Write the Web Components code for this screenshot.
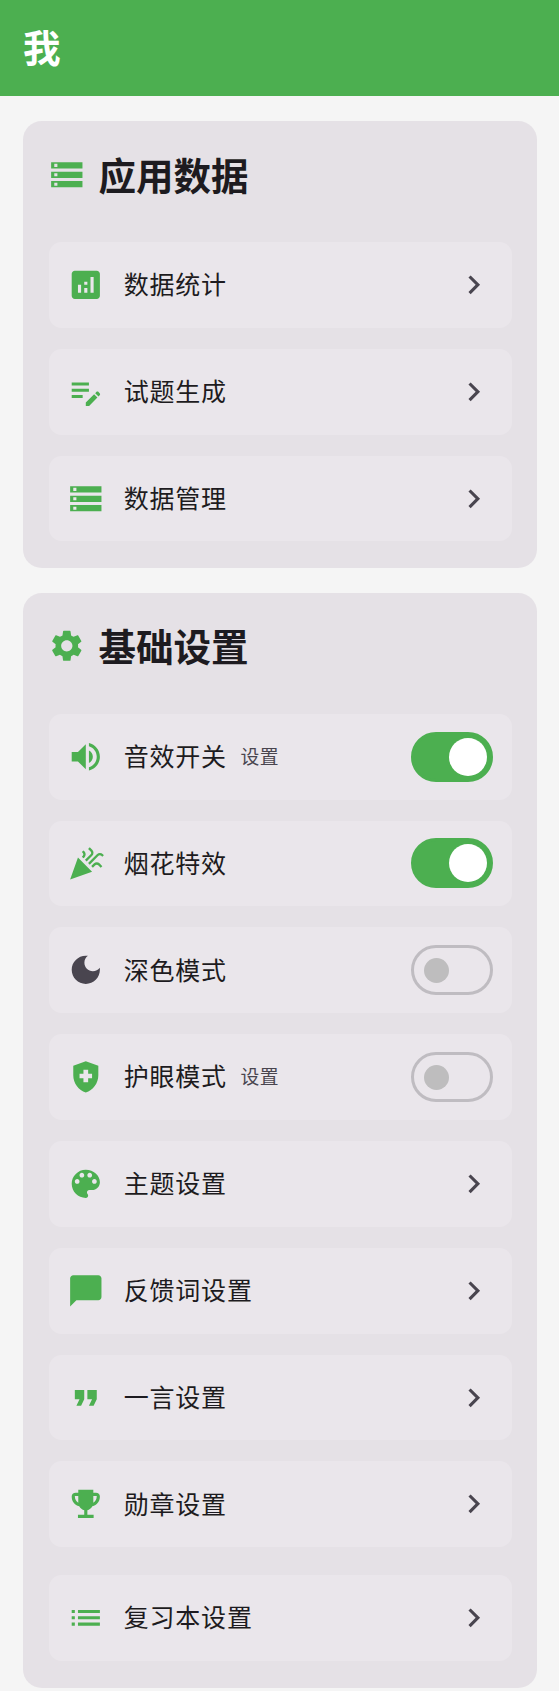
<!DOCTYPE html>
<html lang="zh-CN">
<head>
<meta charset="UTF-8">
<meta name="viewport" content="width=device-width, initial-scale=1">
<title>我</title>
<style>
    body {
        margin: 0;
        background: #f5f5f5;
        font-family: "Noto Sans CJK SC", sans-serif;
    }
</style>
</head>
<body>
<settings-page heading="我">
    <settings-card icon="storage" heading="应用数据">
        <settings-row icon="analytics">数据统计</settings-row>
        <settings-row icon="editNote">试题生成</settings-row>
        <settings-row icon="storage">数据管理</settings-row>
    </settings-card>
    <settings-card icon="settings" heading="基础设置">
        <settings-row icon="volume" hint="设置">音效开关<toggle-switch slot="action" checked></toggle-switch></settings-row>
        <settings-row icon="celebration">烟花特效<toggle-switch slot="action" checked></toggle-switch></settings-row>
        <settings-row icon="moon" muted>深色模式<toggle-switch slot="action"></toggle-switch></settings-row>
        <settings-row icon="shield" hint="设置">护眼模式<toggle-switch slot="action"></toggle-switch></settings-row>
        <settings-row icon="palette">主题设置</settings-row>
        <settings-row icon="chat">反馈词设置</settings-row>
        <settings-row icon="quote">一言设置</settings-row>
        <settings-row icon="trophy">勋章设置</settings-row>
        <settings-row icon="list" spaced>复习本设置</settings-row>
    </settings-card>
</settings-page>

<script>
const ICONS = {
    storage: 'M2 20h20v-4H2v4zm2-3h2v2H4v-2zM2 4v4h20V4H2zm4 3H4V5h2v2zm-4 7h20v-4H2v4zm2-3h2v2H4v-2z',
    analytics: 'M19 3H5c-1.1 0-2 .9-2 2v14c0 1.1.9 2 2 2h14c1.1 0 2-.9 2-2V5c0-1.1-.9-2-2-2zM9 17H7v-5h2v5zm4 0h-2v-3h2v3zm0-5h-2v-2h2v2zm4 5h-2V7h2v10z',
    editNote: 'M3 10h11v2H3v-2zm0-2h11V6H3v2zm0 8h7v-2H3v2zm15.01-3.13.71-.71c.39-.39 1.02-.39 1.41 0l.71.71c.39.39.39 1.02 0 1.41l-.71.71-2.12-2.12zm-.71.71-5.3 5.3V21h2.12l5.3-5.3-2.12-2.12z',
    settings: 'M19.14 12.94c.04-.3.06-.61.06-.94 0-.32-.02-.64-.07-.94l2.03-1.58c.18-.14.23-.41.12-.61l-1.92-3.32c-.12-.22-.37-.29-.59-.22l-2.39.96c-.5-.38-1.03-.7-1.62-.94l-.36-2.54c-.04-.24-.24-.41-.48-.41h-3.84c-.24 0-.43.17-.47.41l-.36 2.54c-.59.24-1.13.57-1.62.94l-2.39-.96c-.22-.08-.47 0-.59.22L2.74 8.87c-.12.21-.08.47.12.61l2.03 1.58c-.05.3-.09.63-.09.94s.02.64.07.94l-2.03 1.58c-.18.14-.23.41-.12.61l1.92 3.32c.12.22.37.29.59.22l2.39-.96c.5.38 1.03.7 1.62.94l.36 2.54c.05.24.24.41.48.41h3.84c.24 0 .44-.17.47-.41l.36-2.54c.59-.24 1.13-.56 1.62-.94l2.39.96c.22.08.47 0 .59-.22l1.92-3.32c.12-.22.07-.47-.12-.61l-2.01-1.58zM12 15.6c-1.98 0-3.6-1.62-3.6-3.6s1.62-3.6 3.6-3.6 3.6 1.62 3.6 3.6-1.62 3.6-3.6 3.6z',
    volume: 'M3 9v6h4l5 5V4L7 9H3zm13.5 3c0-1.77-1.02-3.29-2.5-4.03v8.05c1.48-.73 2.5-2.25 2.5-4.02zM14 3.23v2.06c2.89.86 5 3.54 5 6.71s-2.11 5.85-5 6.71v2.06c4.01-.91 7-4.49 7-8.77s-2.99-7.86-7-8.77z',
    celebration: 'M2 22l14-5-9-9zM14.53 12.53l5.59-5.59c.49-.49 1.28-.49 1.77 0l.59.59 1.06-1.06-.59-.59c-1.07-1.07-2.82-1.07-3.89 0l-5.59 5.59 1.06 1.06zM10.06 6.88l-.59.59 1.06 1.06.59-.59c1.07-1.07 1.07-2.82 0-3.89l-.59-.59-1.06 1.07.59.59c.48.48.48 1.28 0 1.76zM17.06 11.88l-1.59 1.59 1.06 1.06 1.59-1.59c.49-.49 1.28-.49 1.77 0l1.61 1.61 1.06-1.06-1.61-1.61c-1.08-1.07-2.82-1.07-3.89 0zM15.06 5.88l-3.59 3.59 1.06 1.06 3.59-3.59c1.07-1.07 1.07-2.82 0-3.89l-1.59-1.59-1.06 1.06 1.59 1.59c.48.49.48 1.29 0 1.77z',
    moon: 'M12 3c-4.97 0-9 4.03-9 9s4.03 9 9 9 9-4.03 9-9c0-.46-.04-.92-.1-1.36-.98 1.37-2.58 2.26-4.4 2.26-2.98 0-5.4-2.42-5.4-5.4 0-1.81.89-3.42 2.26-4.4-.44-.06-.9-.1-1.36-.1z',
    shield: 'M12 2 4 5v6.09c0 5.05 3.41 9.76 8 10.91 4.59-1.15 8-5.86 8-10.91V5l-8-3zM10.5 13H8v-3h2.5V7.5h3V10H16v3h-2.5v2.5h-3V13z',
    palette: 'M12 3c-4.97 0-9 4.03-9 9s4.03 9 9 9c.83 0 1.5-.67 1.5-1.5 0-.39-.15-.74-.39-1.01-.23-.26-.38-.61-.38-.99 0-.83.67-1.5 1.5-1.5H16c2.76 0 5-2.24 5-5 0-4.42-4.03-8-9-8zm-5.5 9c-.83 0-1.5-.67-1.5-1.5S5.67 9 6.5 9 8 9.67 8 10.5 7.33 12 6.5 12zm3-4C8.67 8 8 7.33 8 6.5S8.67 5 9.5 5s1.5.67 1.5 1.5S10.33 8 9.5 8zm5 0c-.83 0-1.5-.67-1.5-1.5S13.67 5 14.5 5s1.5.67 1.5 1.5S15.33 8 14.5 8zm3 4c-.83 0-1.5-.67-1.5-1.5S16.67 9 17.5 9s1.5.67 1.5 1.5-.67 1.5-1.5 1.5z',
    chat: 'M20 2H4c-1.1 0-2 .9-2 2v18l4-4h14c1.1 0 2-.9 2-2V4c0-1.1-.9-2-2-2z',
    quote: 'M6 17h3l2-4V7H5v6h3zm8 0h3l2-4V7h-6v6h3z',
    trophy: 'M7.2 3h9.6v2h1.6C20 5 21 5.9 21 7.4c0 3.1-1.9 5.7-4.8 6.1-.8 1.3-1.9 2.2-3.2 2.6V19h4v2H7v-2h4v-2.9c-1.3-.4-2.400-1.300-3.200-2.600C4.900 13.100 3 10.500 3 7.400 3 5.900 4 5 5.600 5h1.600V3zM5 7c0 1.900.8 3.500 2.200 4.300V7H5zm14 0h-2.200v4.300C18.200 10.500 19 8.900 19 7z',
    list: 'M3 13h2v-2H3v2zm0 4h2v-2H3v2zm0-8h2V7H3v2zm4 4h14v-2H7v2zm0 4h14v-2H7v2zM7 7v2h14V7H7z',
    chevron: 'M10 6 8.59 7.41 13.17 12l-4.58 4.59L10 18l6-6z'
};

class AppIcon extends HTMLElement {
    connectedCallback() {
        if (!this.shadowRoot) this.attachShadow({ mode: 'open' });
        this.shadowRoot.innerHTML = `
            <style>
                :host { display: block; flex: none; width: 37.6px; height: 37.6px; }
                svg { display: block; width: 100%; height: 100%; fill: currentColor; }
            </style>
            <svg viewBox="0 0 24 24" aria-hidden="true"><path fill-rule="evenodd" d="${ICONS[this.getAttribute('name')]}"/></svg>
        `;
    }
}

class ToggleSwitch extends HTMLElement {
    constructor() {
        super();
        this.attachShadow({ mode: 'open' });
        this.shadowRoot.innerHTML = `
            <style>
                :host {
                    display: flex;
                    align-items: center;
                    box-sizing: border-box;
                    width: 81.4px;
                    height: 50px;
                    padding-left: 9.5px;
                    border: 3px solid #bfbcc1;
                    border-radius: 25px;
                    cursor: pointer;
                }
                span {
                    width: 25px;
                    height: 25px;
                    border-radius: 50%;
                    background: #bebdbe;
                }
                :host([checked]) {
                    justify-content: flex-end;
                    padding: 0 3px 0 0;
                    border-color: #4caf50;
                    background: #4caf50;
                }
                :host([checked]) span {
                    width: 38px;
                    height: 38px;
                    background: #fff;
                }
            </style>
            <span></span>
        `;
    }

    connectedCallback() {
        this.setAttribute('role', 'switch');
        this._clickHandler = () => this.toggleAttribute('checked');
        this.addEventListener('click', this._clickHandler);
    }

    disconnectedCallback() {
        this.removeEventListener('click', this._clickHandler);
    }
}

class SettingsRow extends HTMLElement {
    connectedCallback() {
        if (!this.shadowRoot) this.attachShadow({ mode: 'open' });
        const hint = this.getAttribute('hint');
        this.shadowRoot.innerHTML = `
            <style>
                :host {
                    display: flex;
                    align-items: center;
                    box-sizing: border-box;
                    height: 85.8px;
                    margin-left: 1px;
                    padding: 0 19.2px 0 17.8px;
                    border-radius: 12.5px;
                    background: #eae6eb;
                    color: #1d1b20;
                }
                :host([spaced]) { margin-top: 7px; }
                .lead { color: #4caf50; margin-right: 19.4px; }
                :host([muted]) .lead { color: #49454f; }
                .label {
                    padding-bottom: 3.4px;
                    font-size: 25px;
                    line-height: 38px;
                    letter-spacing: 0.78px;
                    white-space: nowrap;
                }
                .hint {
                    margin-left: 13.5px;
                    padding-bottom: 3px;
                    font-size: 18.8px;
                    line-height: 25px;
                    letter-spacing: 0.63px;
                    color: #49454f;
                }
                .action { margin-left: auto; }
                .action app-icon { color: #49454f; }
            </style>
            <app-icon class="lead" name="${this.getAttribute('icon')}"></app-icon>
            <span class="label"><slot></slot></span>
            ${hint ? `<span class="hint">${hint}</span>` : ''}
            <div class="action"><slot name="action"><app-icon name="chevron"></app-icon></slot></div>
        `;
    }
}

class SettingsCard extends HTMLElement {
    connectedCallback() {
        if (!this.shadowRoot) this.attachShadow({ mode: 'open' });
        this.shadowRoot.innerHTML = `
            <style>
                :host {
                    display: block;
                    padding: 25px 25px 26.4px;
                    border-radius: 18.8px;
                    background: #e5e1e6;
                }
                :host(:last-of-type) { padding-bottom: 27.4px; }
                header {
                    display: flex;
                    align-items: center;
                    gap: 12.8px;
                    height: 55px;
                    margin-bottom: 41px;
                    color: #4caf50;
                }
                app-icon { margin-bottom: -2px; }
                h2 {
                    margin: 0;
                    font-size: 37.5px;
                    line-height: 50px;
                    font-weight: 700;
                    color: #1d1b20;
                }
                .rows {
                    display: flex;
                    flex-direction: column;
                    gap: 21px;
                }
            </style>
            <header>
                <app-icon name="${this.getAttribute('icon')}"></app-icon>
                <h2>${this.getAttribute('heading')}</h2>
            </header>
            <div class="rows"><slot></slot></div>
        `;
    }
}

class SettingsPage extends HTMLElement {
    connectedCallback() {
        if (!this.shadowRoot) this.attachShadow({ mode: 'open' });
        this.shadowRoot.innerHTML = `
            <style>
                :host { display: block; }
                header {
                    display: flex;
                    align-items: center;
                    box-sizing: border-box;
                    height: 96px;
                    padding: 0 23px 5px;
                    background: #4caf50;
                    color: #fff;
                }
                h1 {
                    margin: 0;
                    font-size: 37.5px;
                    line-height: 50px;
                    font-weight: 700;
                }
                main {
                    display: flex;
                    flex-direction: column;
                    gap: 25px;
                    padding: 25px 22px 1px 23px;
                }
            </style>
            <header><h1>${this.getAttribute('heading')}</h1></header>
            <main><slot></slot></main>
        `;
    }
}

customElements.define('app-icon', AppIcon);
customElements.define('toggle-switch', ToggleSwitch);
customElements.define('settings-row', SettingsRow);
customElements.define('settings-card', SettingsCard);
customElements.define('settings-page', SettingsPage);
</script>
</body>
</html>
